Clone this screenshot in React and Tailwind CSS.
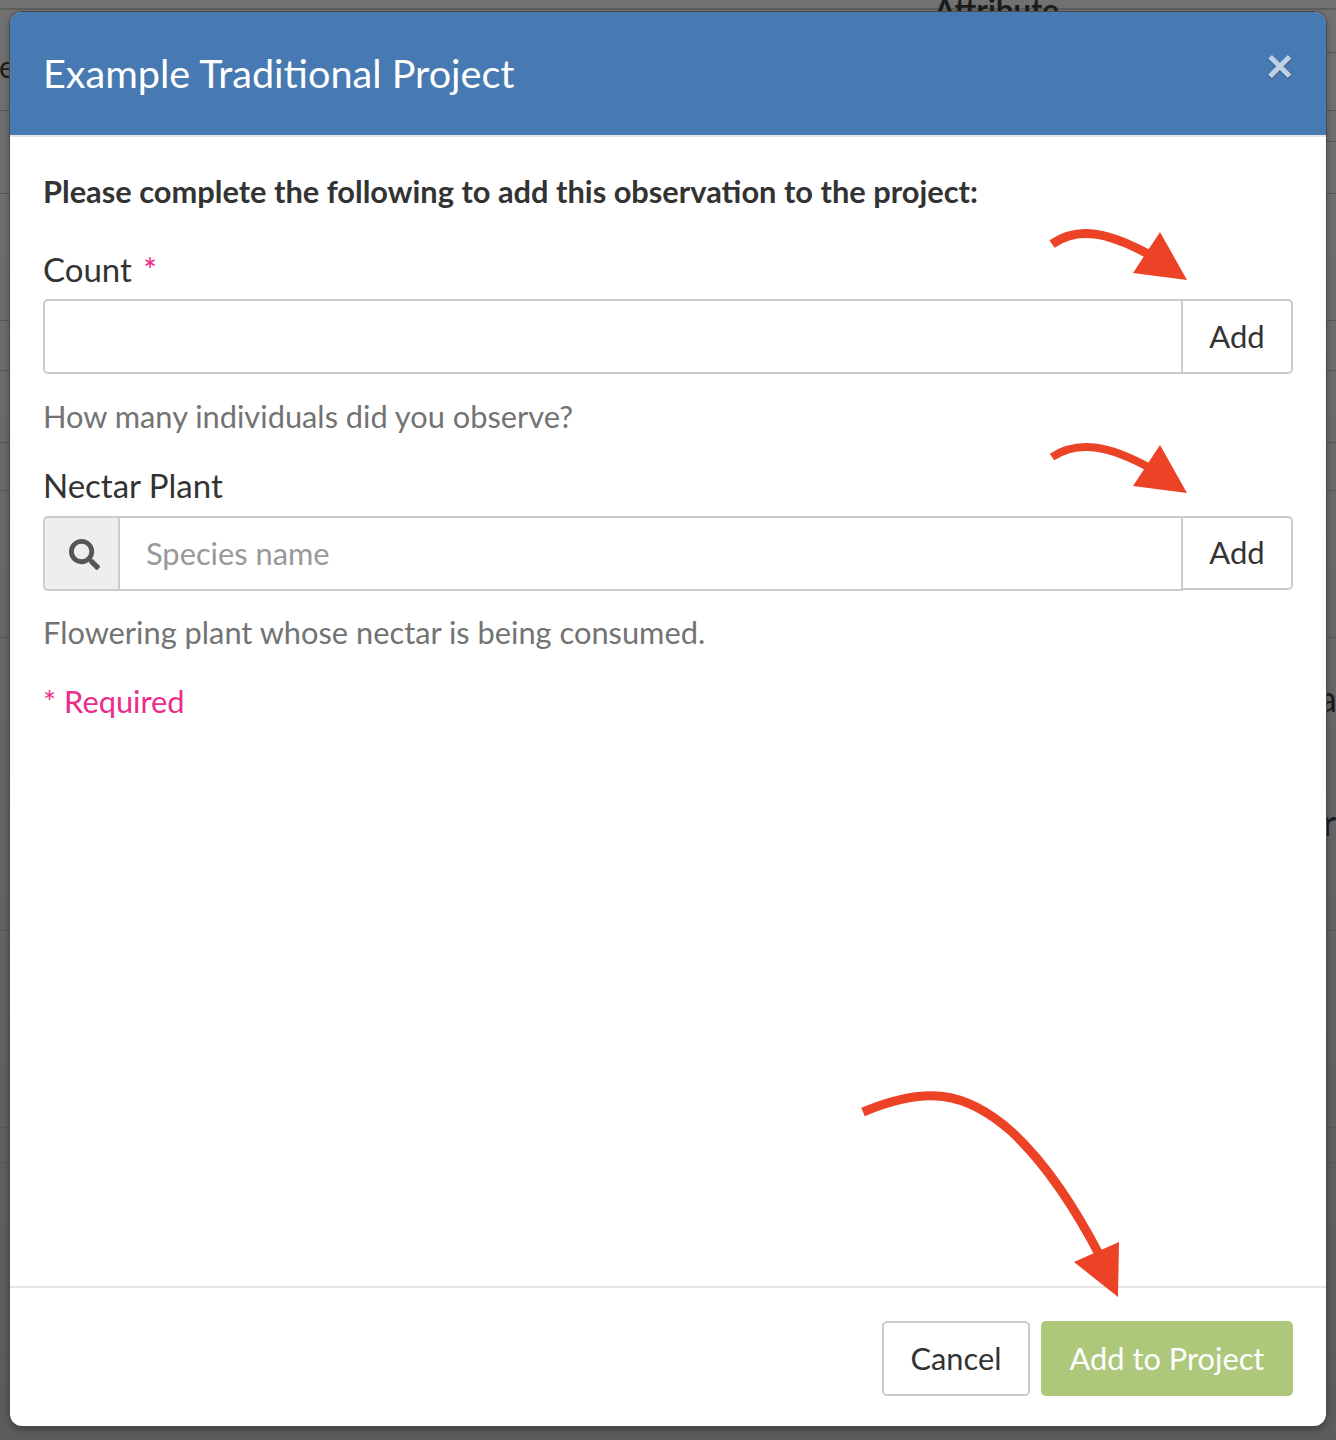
import { FaSearch } from "react-icons/fa";

const lato = "font-['Lato','Open_Sans',sans-serif]";

function Arrows() {
  return (
    <svg className="absolute top-0 left-0 pointer-events-none" width="1336" height="1440" viewBox="0 0 1336 1440">
      <g fill="none" stroke="#ec4225" strokeWidth="9">
        <path d="M1052 244 C1078 226 1108 232 1150 255" />
        <path d="M1052 457 C1078 440 1108 445 1150 468" strokeWidth="8" />
        <path d="M863 1112 C925 1086 965 1090 1012 1132 C1048 1166 1075 1208 1100 1256" />
      </g>
      <g fill="#ec4225">
        <polygon points="1160,232 1187,280 1133,273" />
        <polygon points="1160,445 1187,493 1133,486" />
        <polygon points="1119,1242 1118,1297 1074,1262" />
      </g>
    </svg>
  );
}

function Backdrop() {
  const lines = [110, 193, 320, 370, 442, 490, 637, 930, 1127, 1162, 1285, 1357, 1391];
  return (
    <div className={`absolute inset-0 overflow-hidden bg-gradient-to-b from-[#727272] to-[#5c5c5c] ${lato}`}>
      <div className="absolute top-[8px] left-0 right-0 h-[2px] bg-[#5e5e5e]" />
      <div className="absolute top-[52px] right-0 w-[12px] h-px bg-[#555555]" />
      <div className="absolute top-[141px] right-0 w-[12px] h-px bg-[#555555]" />
      {lines.map((y) => (
        <div key={y} className="absolute left-0 right-0 h-px bg-[#585858]" style={{ top: y }} />
      ))}
      <div className="absolute left-[934px] top-[-9px] text-[31px] leading-[36px] font-bold text-[#1c1c1c]">Attribute</div>
      <div className="absolute left-[-8px] top-[48px] text-[30px] leading-[36px] text-[#1c1c1c]">le</div>
      <div className="absolute left-[1319px] top-[678px] text-[36px] leading-[40px] text-[#1c1c1c]">a</div>
      <div className="absolute left-[1323px] top-[802px] text-[36px] leading-[40px] text-[#1c1c1c]">r</div>
    </div>
  );
}

function AddButton({ className = "" }) {
  return (
    <button className={`w-[110px] shrink-0 border-2 border-l-0 border-[#cccccc] rounded-r-[5px] bg-white text-[31px] text-[#333333] ${className}`}>
      Add
    </button>
  );
}

export default function App() {
  return (
    <div className={`relative w-[1336px] h-[1440px] overflow-hidden ${lato}`}>
      <Backdrop />
      <div className="relative pt-[12px] px-[10px]">
        <div className="flex flex-col h-[1414px] bg-white rounded-[12px] overflow-hidden shadow-[0_0_0_1px_#4a4a4a,0_3px_8px_rgba(0,0,0,0.35)]">
          <div className="flex justify-between h-[125px] shrink-0 bg-[#4779b3] border-b-2 border-[#e5e5e5] pl-[33px] pr-[33px]">
            <h1 className="text-[39.6px] leading-[48px] pt-[37px] font-normal text-white">Example Traditional Project</h1>
            <button className="self-start mt-[28px] text-[46px] leading-[52px] font-bold text-[#bfd1e6] font-['Liberation_Sans',sans-serif] [text-shadow:0_1px_1px_#3a4a60]">
              ×
            </button>
          </div>

          <div className="flex-1 px-[33px] pt-[37px]">
            <p className="text-[30.8px] leading-[36px] font-bold text-[#333333]">
              Please complete the following to add this observation to the project:
            </p>

            <label className="block h-[40px] mt-[39px] text-[33px] leading-[40px] text-[#333333]">
              Count <span className="text-[#ec2b8c] align-top text-[32px] leading-[41px] font-medium ml-[3px]">*</span>
            </label>
            <div className="flex h-[75px] mt-[10px]">
              <input className="flex-1 min-w-0 border-2 border-[#cccccc] rounded-l-[5px] outline-none" />
              <AddButton />
            </div>
            <p className="mt-[25px] text-[30.8px] leading-[36px] text-[#737373]">How many individuals did you observe?</p>

            <label className="block mt-[30px] text-[33px] leading-[40px] text-[#333333]">Nectar Plant</label>
            <div className="flex h-[75px] mt-[11px]">
              <div className="flex items-center justify-center w-[75px] shrink-0 bg-[#eeeeee] border-2 border-r-0 border-[#cccccc] rounded-l-[5px] text-[#555555]">
                <FaSearch size={31} className="mt-[2px] ml-[6px]" />
              </div>
              <input
                placeholder="Species name"
                className="flex-1 min-w-0 px-[26px] pt-[2px] border-2 border-[#cccccc] outline-none text-[30.8px] placeholder:text-[#999999]"
              />
              <div className="flex h-[74px]">
                <AddButton className="pb-[2px]" />
              </div>
            </div>
            <p className="mt-[24px] text-[30.8px] leading-[36px] text-[#737373]">Flowering plant whose nectar is being consumed.</p>

            <p className="mt-[33px] text-[30.8px] leading-[36px] text-[#ec2b8c]">
              <span className="mr-[8px]">*</span>Required
            </p>
          </div>

          <div className="flex justify-end gap-[11px] h-[140px] shrink-0 border-t-2 border-[#e5e5e5] pt-[33px] pr-[33px]">
            <button className="w-[148px] h-[75px] pt-[2px] border-2 border-[#cccccc] rounded-[5px] bg-white text-[30.8px] text-[#333333]">
              Cancel
            </button>
            <button className="w-[252px] h-[75px] pt-[2px] rounded-[5px] bg-[#adc87b] text-[30.8px] text-white">
              Add to Project
            </button>
          </div>
        </div>
      </div>
      <Arrows />
    </div>
  );
}
